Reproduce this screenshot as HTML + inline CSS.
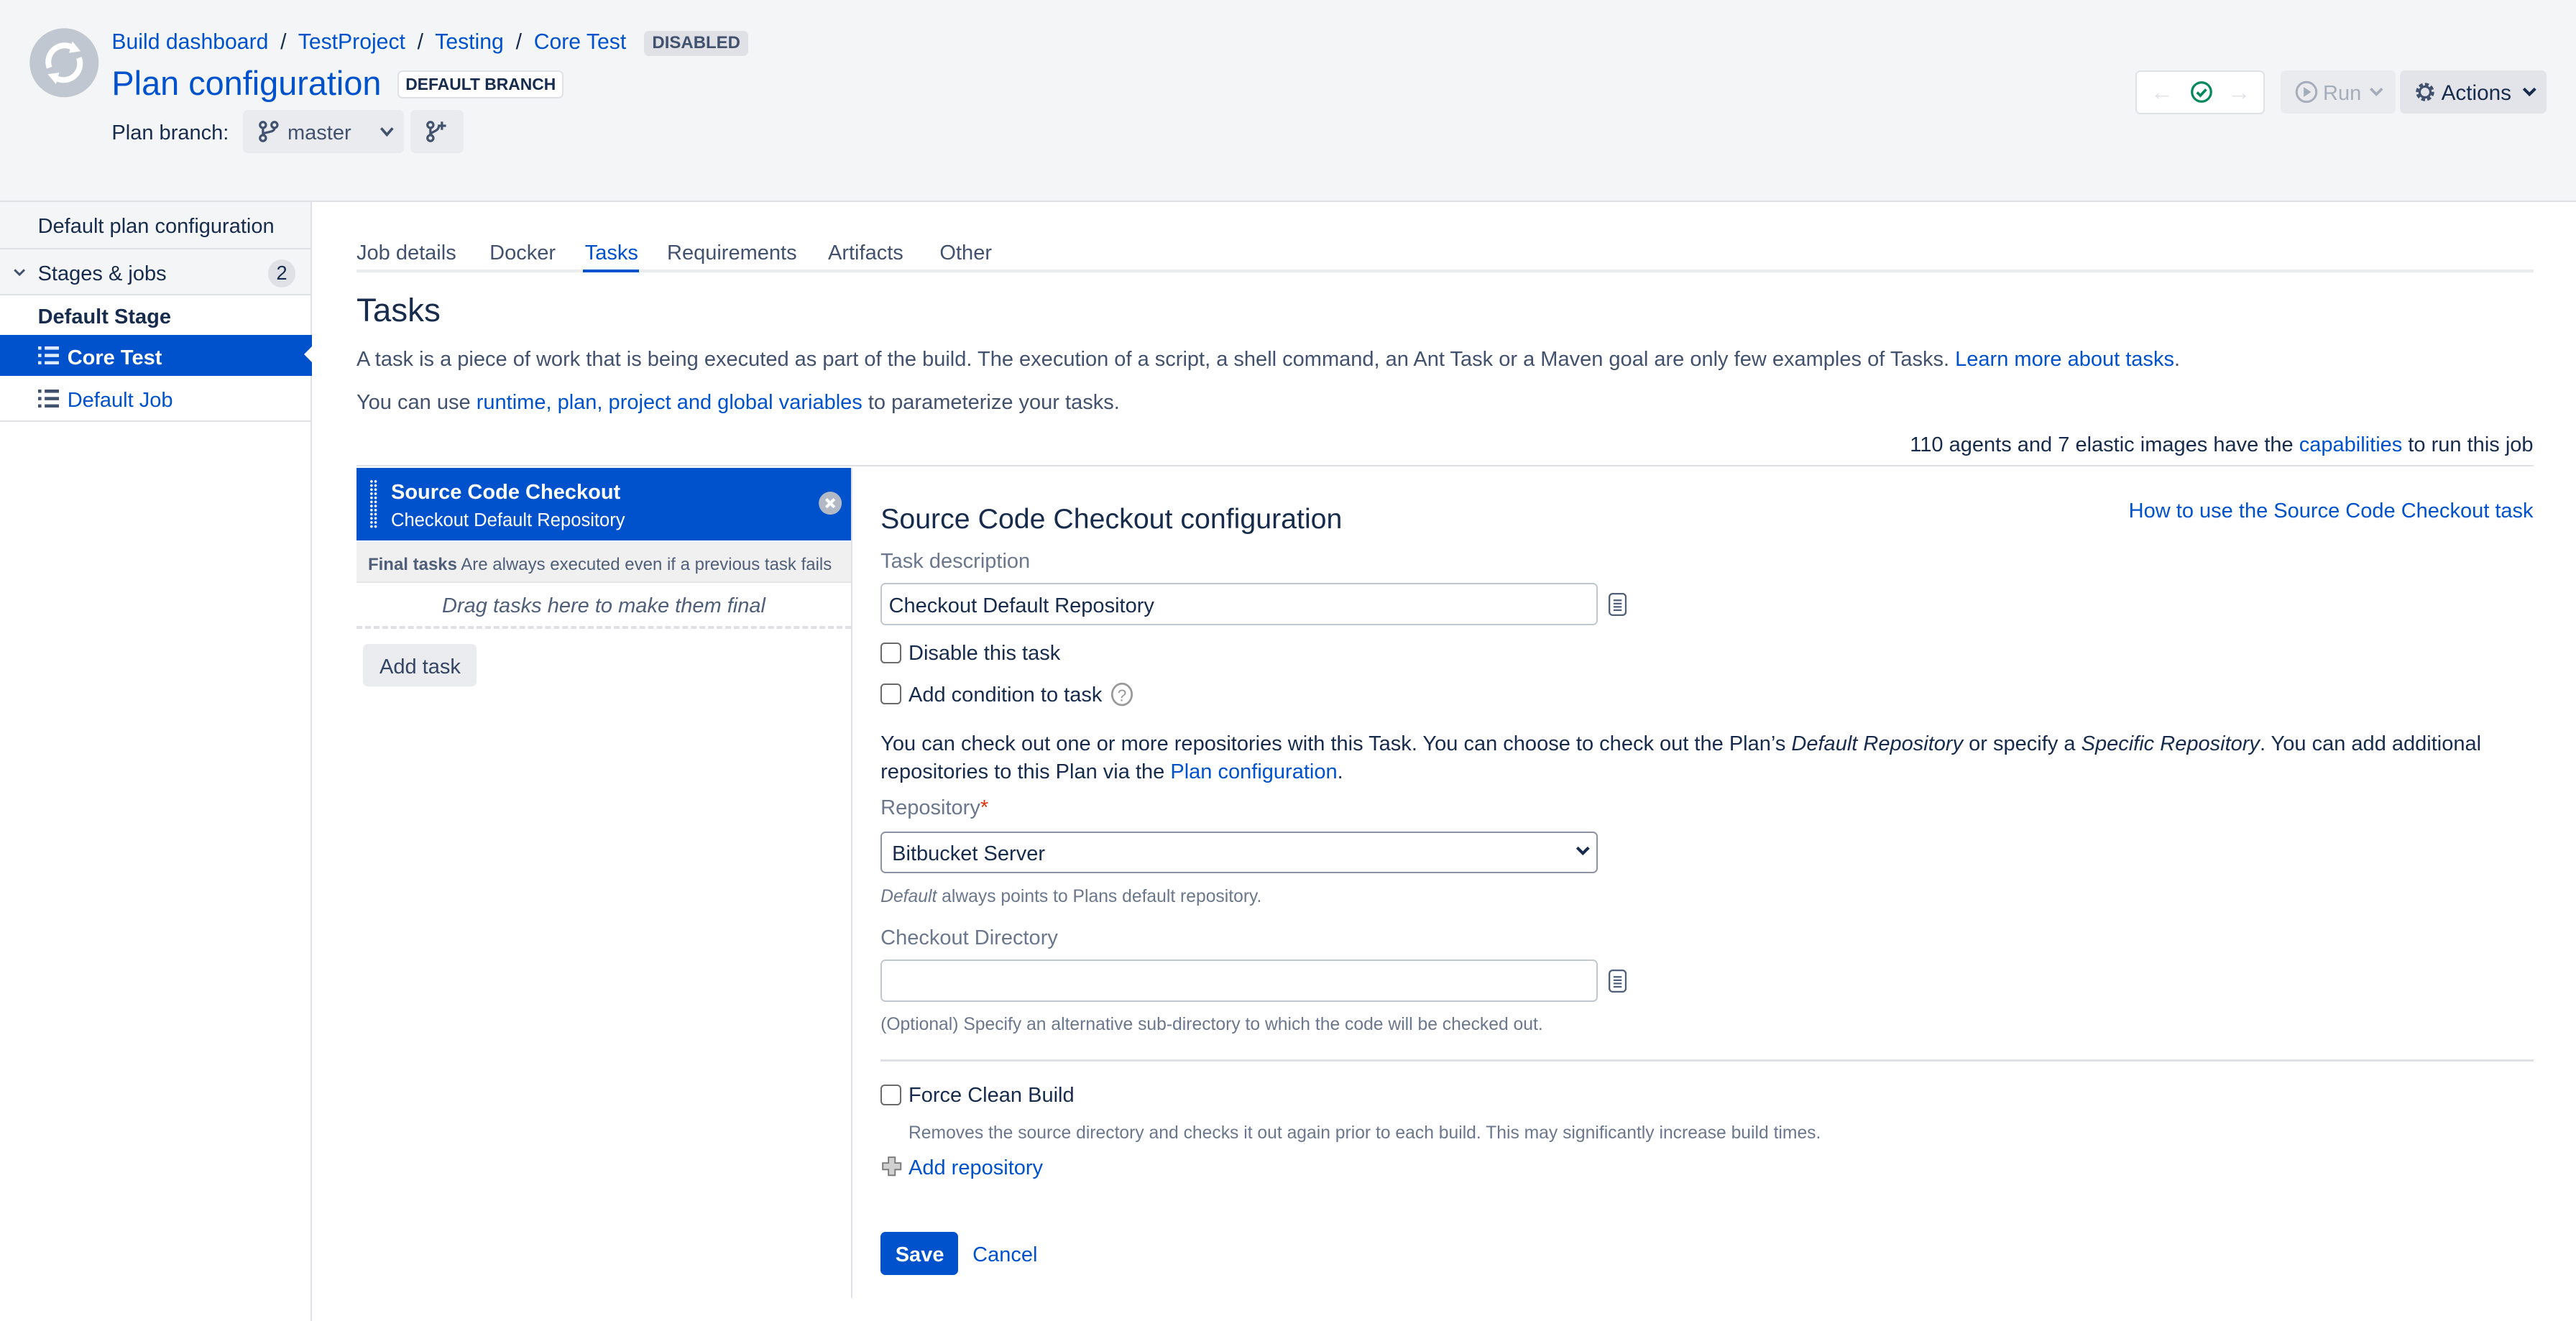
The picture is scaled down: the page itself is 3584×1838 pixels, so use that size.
<!DOCTYPE html>
<html><head><meta charset="utf-8">
<style>
html,body{margin:0;padding:0;background:#fff;}
body{width:3584px;height:1838px;overflow:hidden;}
#w{zoom:2.285714;width:1568px;height:804px;position:relative;font-family:"Liberation Sans",Arial,sans-serif;color:#172b4d;font-size:12.7px;}
.a{position:absolute;white-space:nowrap;line-height:16px;margin-top:1px;}
.l{color:#0052cc;}
.g{color:#6b778c;}
.hdr{position:absolute;left:0;top:0;width:1568px;height:122px;background:#f4f5f7;border-bottom:1px solid #dfe1e6;}
.btn{position:absolute;background:#e9ebee;border-radius:3px;}
.cb{position:absolute;width:11px;height:11px;border:1px solid #6b6b6b;border-radius:2.5px;background:#fff;}
.inp{position:absolute;border:1px solid #c1c7d0;border-radius:3px;background:#fff;}
</style></head><body><div id="w">
<div class="hdr"></div>
<svg style="position:absolute;left:17px;top:16px" width="44" height="44" viewBox="0 0 44 44"><circle cx="22" cy="22" r="21" fill="#c1c7d0"/><path d="M13 25a10 10 0 0 1 16-11" fill="none" stroke="#fff" stroke-width="3.5"/><path d="M31 19a10 10 0 0 1-16 11" fill="none" stroke="#fff" stroke-width="3.5"/><path d="M27 9l5 6-7 1z" fill="#fff"/><path d="M17 35l-5-6 7-1z" fill="#fff"/></svg>
<div class="a l" style="left:68px;top:17px;font-size:13.2px">Build dashboard <span style="color:#172b4d">&nbsp;/&nbsp;</span> TestProject <span style="color:#172b4d">&nbsp;/&nbsp;</span> Testing <span style="color:#172b4d">&nbsp;/&nbsp;</span> Core Test</div>
<div class="a" style="left:392px;top:18px;height:15px;line-height:15px;padding:0 5px;background:#dfe1e6;border-radius:3px;font-size:10.5px;font-weight:bold;color:#42526e">DISABLED</div>
<div class="a l" style="left:68px;top:38px;font-size:20.5px;line-height:24px">Plan configuration</div>
<div class="a" style="left:242px;top:42px;height:15px;line-height:15px;padding:0 4px;background:#fff;border:1px solid #dfe1e6;border-radius:3px;font-size:10px;font-weight:bold;color:#172b4d">DEFAULT BRANCH</div>
<div class="a" style="left:68px;top:72px">Plan branch:</div>
<div class="btn" style="left:148px;top:67px;width:98px;height:26px"></div>
<svg style="position:absolute;left:157px;top:73px" width="13" height="14" viewBox="0 0 13 14" fill="none" stroke="#42526e" stroke-width="1.4"><circle cx="3" cy="3" r="1.8"/><circle cx="3" cy="11" r="1.8"/><circle cx="10" cy="3" r="1.8"/><path d="M3 5v4M10 5c0 3-7 2-7 4"/></svg>
<div class="a" style="left:175px;top:72px;color:#42526e">master</div>
<svg style="position:absolute;left:231px;top:77px" width="9" height="7" viewBox="0 0 9 7"><path d="M1 1l3.5 4L8 1" fill="none" stroke="#42526e" stroke-width="1.6"/></svg>
<div class="btn" style="left:250px;top:67px;width:32px;height:26px"></div>
<svg style="position:absolute;left:259px;top:73px" width="14" height="14" viewBox="0 0 14 14" fill="none" stroke="#42526e" stroke-width="1.4"><circle cx="3" cy="3" r="1.8"/><circle cx="3" cy="11" r="1.8"/><path d="M3 5v4M3 9c0-2 5-2 5-5M10 1v5M7.5 3.5h5"/></svg>
<div style="position:absolute;left:1300px;top:43px;width:77px;height:25px;background:#fff;border:1px solid #dfe1e6;border-radius:3px"></div>
<div class="a" style="left:1309px;top:47px;color:#dfe1e6;font-size:14px">&larr;</div>
<div class="a" style="left:1356px;top:47px;color:#dfe1e6;font-size:14px">&rarr;</div>
<svg style="position:absolute;left:1333px;top:49px" width="14" height="14" viewBox="0 0 14 14"><circle cx="7" cy="7" r="5.8" fill="none" stroke="#00875a" stroke-width="1.4"/><path d="M4.3 7.2l2 2 3.5-3.8" fill="none" stroke="#00875a" stroke-width="1.6"/></svg>
<div class="btn" style="left:1388px;top:43px;width:70px;height:26px;background:#eaebee"></div>
<svg style="position:absolute;left:1397px;top:49px" width="14" height="14" viewBox="0 0 14 14"><circle cx="7" cy="7" r="6" fill="none" stroke="#a5adba" stroke-width="1.3"/><path d="M5.3 4v6l4.5-3z" fill="#a5adba"/></svg>
<div class="a" style="left:1414px;top:48px;color:#a5adba">Run</div>
<svg style="position:absolute;left:1442px;top:53px" width="9" height="6" viewBox="0 0 9 6"><path d="M1 1l3.5 3.5L8 1" fill="none" stroke="#a5adba" stroke-width="1.6"/></svg>
<div class="btn" style="left:1461px;top:43px;width:89px;height:26px;background:#e2e4e9"></div>
<svg style="position:absolute;left:1469px;top:49px" width="14" height="14" viewBox="0 0 14 14"><circle cx="7" cy="7" r="4.5" fill="none" stroke="#42526e" stroke-width="2.2" stroke-dasharray="2.2 1.3"/><circle cx="7" cy="7" r="3.3" fill="none" stroke="#42526e" stroke-width="1.4"/></svg>
<div class="a" style="left:1486px;top:48px;font-size:13px">Actions</div>
<svg style="position:absolute;left:1535px;top:53px" width="9" height="6" viewBox="0 0 9 6"><path d="M1 1l3.5 3.5L8 1" fill="none" stroke="#172b4d" stroke-width="1.8"/></svg>

<div style="position:absolute;left:0;top:123px;width:189px;height:681px;border-right:1px solid #dfe1e6"></div>
<div style="position:absolute;left:0;top:123px;width:189px;height:28px;background:#f4f5f7;border-bottom:1px solid #dfe1e6"></div>
<div class="a" style="left:23px;top:129px">Default plan configuration</div>
<div style="position:absolute;left:0;top:152px;width:189px;height:27px;background:#f4f5f7;border-bottom:1px solid #dfe1e6"></div>
<svg style="position:absolute;left:8px;top:163px" width="8" height="6" viewBox="0 0 8 6"><path d="M1 1l3 3 3-3" fill="none" stroke="#42526e" stroke-width="1.3"/></svg>
<div class="a" style="left:23px;top:158px">Stages &amp; jobs</div>
<div class="a" style="left:163px;top:157px;width:17px;height:17px;line-height:17px;border-radius:9px;background:#dfe1e6;text-align:center;font-size:12px">2</div>
<div class="a" style="left:23px;top:184px;font-weight:bold">Default Stage</div>
<div style="position:absolute;left:0;top:204px;width:190px;height:25px;background:#0052cc"></div>
<div style="position:absolute;left:185px;top:211px;width:0;height:0;border-top:5px solid transparent;border-bottom:5px solid transparent;border-right:5px solid #fff"></div>
<svg style="position:absolute;left:23px;top:211px" width="13" height="11" viewBox="0 0 13 11" fill="#deebff"><rect x="0" y="0" width="2" height="2"/><rect x="0" y="4.5" width="2" height="2"/><rect x="0" y="9" width="2" height="2"/><rect x="4" y="0" width="9" height="2"/><rect x="4" y="4.5" width="9" height="2"/><rect x="4" y="9" width="9" height="2"/></svg>
<div class="a" style="left:41px;top:209px;color:#fff;font-weight:bold">Core Test</div>
<svg style="position:absolute;left:23px;top:237px" width="13" height="11" viewBox="0 0 13 11" fill="#42526e"><rect x="0" y="0" width="2" height="2"/><rect x="0" y="4.5" width="2" height="2"/><rect x="0" y="9" width="2" height="2"/><rect x="4" y="0" width="9" height="2"/><rect x="4" y="4.5" width="9" height="2"/><rect x="4" y="9" width="9" height="2"/></svg>
<div class="a l" style="left:41px;top:235px">Default Job</div>
<div style="position:absolute;left:0;top:256px;width:189px;height:1px;background:#dfe1e6"></div>

<div style="position:absolute;left:217px;top:164px;width:1325px;height:2px;background:#ebecf0"></div>
<div class="a" style="left:217px;top:145px;color:#42526e">Job details</div>
<div class="a" style="left:298px;top:145px;color:#42526e">Docker</div>
<div class="a l" style="left:356px;top:145px">Tasks</div>
<div style="position:absolute;left:355px;top:164px;width:34px;height:2px;background:#0052cc"></div>
<div class="a" style="left:406px;top:145px;color:#42526e">Requirements</div>
<div class="a" style="left:504px;top:145px;color:#42526e">Artifacts</div>
<div class="a" style="left:572px;top:145px;color:#42526e">Other</div>
<div class="a" style="left:217px;top:176px;font-size:20px;line-height:24px;font-weight:500">Tasks</div>
<div class="a" style="left:217px;top:210px;color:#42526e">A task is a piece of work that is being executed as part of the build. The execution of a script, a shell command, an Ant Task or a Maven goal are only few examples of Tasks. <span class="l">Learn more about tasks</span>.</div>
<div class="a" style="left:217px;top:236px;color:#42526e">You can use <span class="l">runtime, plan, project and global variables</span> to parameterize your tasks.</div>
<div class="a" style="right:26px;top:262px">110 agents and 7 elastic images have the <span class="l">capabilities</span> to run this job</div>
<div style="position:absolute;left:217px;top:283px;width:1325px;height:1px;background:#dfe1e6"></div>

<div style="position:absolute;left:217px;top:285px;width:301px;height:44px;background:#0052cc"></div>
<div style="position:absolute;left:225px;top:292px;width:5px;height:30px;background:radial-gradient(circle,#fff 0.7px,transparent 0.9px) 0 0/2.5px 2.5px"></div>
<div class="a" style="left:238px;top:291px;color:#fff;font-weight:bold">Source Code Checkout</div>
<div class="a" style="left:238px;top:308px;color:#fff;font-size:11.2px">Checkout Default Repository</div>
<svg style="position:absolute;left:498px;top:299px" width="15" height="15" viewBox="0 0 15 15"><circle cx="7.5" cy="7.5" r="7" fill="#b3b9c4"/><path d="M5 5l5 5M10 5l-5 5" stroke="#fff" stroke-width="1.8"/></svg>
<div style="position:absolute;left:217px;top:330px;width:301px;height:24px;background:#f0f0f0;border-bottom:1px solid #e6e6e6"></div>
<div class="a" style="left:224px;top:335px;font-size:10.5px;color:#505f79"><b>Final tasks</b> Are always executed even if a previous task fails</div>
<div class="a" style="left:217px;width:301px;text-align:center;top:360px;font-style:italic;color:#505f79">Drag tasks here to make them final</div>
<div style="position:absolute;left:217px;top:381px;width:301px;border-top:2px dashed #dfe1e6"></div>
<div class="btn" style="left:221px;top:392px;width:69px;height:26px;background:#ebecf0"></div>
<div class="a" style="left:231px;top:397px;color:#344563">Add task</div>
<div style="position:absolute;left:518px;top:285px;width:1px;height:505px;background:#dfe1e6"></div>

<div class="a" style="left:536px;top:304px;font-size:17.2px;line-height:22px;font-weight:500">Source Code Checkout configuration</div>
<div class="a l" style="right:26px;top:302px">How to use the Source Code Checkout task</div>
<div class="a g" style="left:536px;top:333px">Task description</div>
<div class="inp" style="left:536px;top:355px;width:435px;height:24px"></div>
<div class="a" style="left:541px;top:360px">Checkout Default Repository</div>
<svg style="position:absolute;left:979px;top:361px" width="11" height="14" viewBox="0 0 11 14" fill="none" stroke="#505f79" stroke-width="1"><rect x="0.5" y="0.5" width="10" height="13" rx="2"/><path d="M3 4.5h5M3 6.5h5M3 8.5h5M3 10.5h5"/></svg>
<div class="cb" style="left:536px;top:391px"></div>
<div class="a" style="left:553px;top:389px">Disable this task</div>
<div class="cb" style="left:536px;top:416px"></div>
<div class="a" style="left:553px;top:414px">Add condition to task</div>
<svg style="position:absolute;left:676px;top:415px" width="14" height="15" viewBox="0 0 14 15"><ellipse cx="7" cy="7.5" rx="6" ry="6.5" fill="none" stroke="#999" stroke-width="1.2"/><text x="7" y="11.5" font-size="10" text-anchor="middle" fill="#999" font-family="Liberation Sans">?</text></svg>
<div class="a" style="left:536px;top:444px">You can check out one or more repositories with this Task. You can choose to check out the Plan’s <i>Default Repository</i> or specify a <i>Specific Repository</i>. You can add additional</div>
<div class="a" style="left:536px;top:461px">repositories to this Plan via the <span class="l">Plan configuration</span>.</div>
<div class="a g" style="left:536px;top:483px">Repository<span style="color:#de350b">*</span></div>
<div class="inp" style="left:536px;top:506px;width:435px;height:24px;border-color:#8993a4"></div>
<div class="a" style="left:543px;top:511px">Bitbucket Server</div>
<svg style="position:absolute;left:959px;top:515px" width="9" height="6" viewBox="0 0 9 6"><path d="M1 1l3.5 3.5L8 1" fill="none" stroke="#172b4d" stroke-width="1.8"/></svg>
<div class="a g" style="left:536px;top:537px;font-size:10.8px"><i>Default</i> always points to Plans default repository.</div>
<div class="a g" style="left:536px;top:562px">Checkout Directory</div>
<div class="inp" style="left:536px;top:584px;width:435px;height:24px"></div>
<svg style="position:absolute;left:979px;top:590px" width="11" height="14" viewBox="0 0 11 14" fill="none" stroke="#505f79" stroke-width="1"><rect x="0.5" y="0.5" width="10" height="13" rx="2"/><path d="M3 4.5h5M3 6.5h5M3 8.5h5M3 10.5h5"/></svg>
<div class="a g" style="left:536px;top:615px;font-size:10.8px">(Optional) Specify an alternative sub-directory to which the code will be checked out.</div>
<div style="position:absolute;left:536px;top:645px;width:1006px;height:1px;background:#dfe1e6"></div>
<div class="cb" style="left:536px;top:660px"></div>
<div class="a" style="left:553px;top:658px">Force Clean Build</div>
<div class="a g" style="left:553px;top:681px;font-size:10.8px">Removes the source directory and checks it out again prior to each build. This may significantly increase build times.</div>
<svg style="position:absolute;left:537px;top:704px" width="12" height="12" viewBox="0 0 12 12"><path d="M4 0.5h4v3.5h3.5v4H8v3.5H4V8H0.5V4H4z" fill="#d0d0d0" stroke="#777" stroke-width="0.8"/></svg>
<div class="a l" style="left:553px;top:702px">Add repository</div>
<div style="position:absolute;left:536px;top:750px;width:47px;height:26px;background:#0052cc;border-radius:3px"></div>
<div class="a" style="left:545px;top:755px;color:#fff;font-weight:bold">Save</div>
<div class="a l" style="left:592px;top:755px">Cancel</div>
</div></body></html>
